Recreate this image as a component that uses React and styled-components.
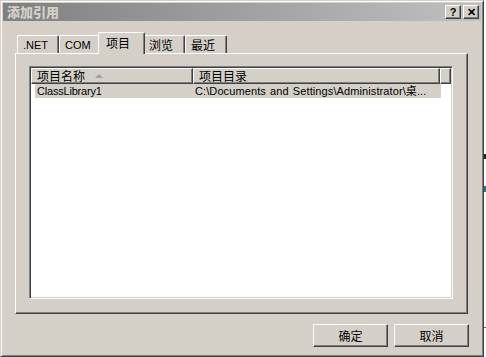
import React from 'react';
import styled, { createGlobalStyle } from 'styled-components';

const GlobalStyle = createGlobalStyle`
  html, body {
    margin: 0;
    padding: 0;
    background: #ffffff;
  }
  body {
    font-family: "Liberation Sans", "Noto Sans CJK SC", sans-serif;
    font-size: 11px;
    color: #000000;
  }
`;

const cjk = `"Noto Sans CJK SC", "Liberation Sans", sans-serif`;

// Whole page: dialog plus a thin strip of what lies behind it
const Page = styled.div`
  display: flex;
  width: 486px;
  height: 357px;
  overflow: hidden;
`;

// Classic raised dialog frame
const Window = styled.div`
  box-sizing: border-box;
  width: 484px;
  height: 357px;
  flex: none;
  background: #d4d0c8;
  border-top: 1px solid #d4d0c8;
  border-left: 1px solid #d4d0c8;
  border-right: 1px solid #404040;
  border-bottom: 1px solid #404040;
  box-shadow: inset 1px 1px 0 #ffffff, inset -1px -1px 0 #808080;
  padding: 2px;
  display: flex;
  flex-direction: column;
`;

const TitleBar = styled.div`
  height: 18px;
  flex: none;
  display: flex;
  align-items: center;
  justify-content: space-between;
  padding: 0 2px 0 4px;
  background: linear-gradient(to right, #808080, #c0c0c0);
`;

const Title = styled.span`
  font-family: ${cjk};
  font-size: 13px;
  font-weight: 900;
  color: #d4d0c8;
  line-height: 18px;
`;

const Caption = styled.div`
  display: flex;
  gap: 2px;
`;

const CaptionButton = styled.div`
  box-sizing: border-box;
  width: 16px;
  height: 14px;
  background: #d4d0c8;
  border-top: 1px solid #ffffff;
  border-left: 1px solid #ffffff;
  border-right: 1px solid #404040;
  border-bottom: 1px solid #404040;
  box-shadow: inset -1px -1px 0 #808080;
  display: flex;
  align-items: center;
  justify-content: center;
  font-family: "Liberation Sans", sans-serif;
  font-weight: bold;
  font-size: 11px;
  line-height: 1;
`;

const Body = styled.div`
  flex: 1;
  display: flex;
  flex-direction: column;
  padding: 11px 0 0 12px;
`;

const Tabs = styled.div`
  display: flex;
  align-items: flex-end;
  height: 21px;
  padding-left: 2px;
  position: relative;
  z-index: 1;
`;

const Tab = styled.div`
  box-sizing: border-box;
  width: ${p => (p.$active ? 47 : 42)}px;
  height: ${p => (p.$active ? 22 : 18)}px;
  margin: ${p => (p.$active ? '0 -2px -1px -3px' : '0')};
  background: #d4d0c8;
  border-top: 1px solid #ffffff;
  border-left: 1px solid #ffffff;
  border-right: 1px solid #404040;
  border-radius: 2px 2px 0 0;
  box-shadow: inset -1px 0 0 #808080;
  display: flex;
  align-items: ${p => (p.$active ? 'flex-start' : 'center')};
  padding: ${p => (p.$active ? '1px 0 0 7px' : '0 0 0 5px')};
  font-family: ${p => (p.$cjk ? cjk : '"Liberation Sans", sans-serif')};
  font-size: ${p => (p.$cjk ? '12px' : '11px')};
  position: relative;
  z-index: ${p => (p.$active ? 2 : 0)};
`;

const Panel = styled.div`
  box-sizing: border-box;
  width: 453px;
  height: 261px;
  border-top: 1px solid #ffffff;
  border-left: 1px solid #ffffff;
  border-right: 1px solid #404040;
  border-bottom: 1px solid #404040;
  box-shadow: inset -1px -1px 0 #808080;
  padding: 12px 0 0 13px;
`;

const ListView = styled.div`
  box-sizing: border-box;
  width: 424px;
  height: 233px;
  background: #ffffff;
  border-top: 1px solid #808080;
  border-left: 1px solid #808080;
  border-right: 1px solid #ffffff;
  border-bottom: 1px solid #ffffff;
  box-shadow: inset 1px 1px 0 #404040, inset -1px -1px 0 #d4d0c8;
  padding: 1px;
`;

const Header = styled.div`
  display: flex;
  height: 16px;
`;

const HeaderCell = styled.div`
  box-sizing: border-box;
  width: ${p => p.$w}px;
  flex: ${p => (p.$w ? 'none' : '1')};
  height: 16px;
  background: #d4d0c8;
  border-top: 1px solid #ffffff;
  border-left: 1px solid #ffffff;
  border-right: 1px solid #404040;
  border-bottom: 1px solid #404040;
  box-shadow: inset -1px -1px 0 #808080;
  display: flex;
  align-items: center;
  gap: 10px;
  padding-left: 5px;
  font-family: ${cjk};
  font-size: 12px;
  line-height: 14px;
`;

const SortArrow = styled.span`
  width: 0;
  height: 0;
  border-left: 4px solid transparent;
  border-right: 4px solid transparent;
  border-bottom: 4px solid #a0a0a0;
`;

const Row = styled.div`
  display: flex;
  height: 14px;
  margin: 0 10px 0 4px;
  background: #d4d0c8;
  align-items: center;
  white-space: nowrap;
`;

const Cell = styled.span`
  box-sizing: border-box;
  width: ${p => p.$w}px;
  flex: ${p => (p.$w ? 'none' : '1')};
  padding-left: 2px;
  overflow: hidden;
  font-family: "Liberation Sans", "Noto Sans CJK SC", sans-serif;
  font-size: 11px;
  letter-spacing: ${p => (p.$wide ? '0.1px' : '-0.2px')};
  word-spacing: ${p => (p.$wide ? '1px' : '0')};
  line-height: 14px;
`;

const Footer = styled.div`
  display: flex;
  justify-content: flex-end;
  gap: 6px;
  padding: 10px 12px 0 0;
`;

const Button = styled.button`
  box-sizing: border-box;
  width: 75px;
  height: 23px;
  background: #d4d0c8;
  border: none;
  border-top: 1px solid #ffffff;
  border-left: 1px solid #ffffff;
  border-right: 1px solid #404040;
  border-bottom: 1px solid #404040;
  box-shadow: inset -1px -1px 0 #808080;
  font-family: ${cjk};
  font-size: 12px;
  color: #000000;
  padding: 0;
`;

// Bit of desktop content peeking out beyond the dialog edge
const Behind = styled.div`
  width: 2px;
  flex: none;
  display: flex;
  flex-direction: column;
  align-items: flex-end;
`;

const Speck = styled.span`
  display: block;
  width: 2px;
  height: ${p => p.$h}px;
  margin-top: ${p => p.$top}px;
  background: ${p => p.$color};
`;

const tabs = [
  { label: '.NET' },
  { label: 'COM' },
  { label: '项目', cjk: true, active: true },
  { label: '浏览', cjk: true },
  { label: '最近', cjk: true },
];

export default function App() {
  return (
    <>
      <GlobalStyle />
      <Page>
        <Window>
          <TitleBar>
            <Title>添加引用</Title>
            <Caption>
              <CaptionButton>?</CaptionButton>
              <CaptionButton>✕</CaptionButton>
            </Caption>
          </TitleBar>
          <Body>
            <Tabs>
              {tabs.map(t => (
                <Tab key={t.label} $active={t.active} $cjk={t.cjk}>
                  {t.label}
                </Tab>
              ))}
            </Tabs>
            <Panel>
              <ListView>
                <Header>
                  <HeaderCell $w={162}>
                    项目名称
                    <SortArrow />
                  </HeaderCell>
                  <HeaderCell $w={247}>项目目录</HeaderCell>
                  <HeaderCell />
                </Header>
                <Row>
                  <Cell $w={158}>ClassLibrary1</Cell>
                  <Cell $wide>C:\Documents and Settings\Administrator\桌...</Cell>
                </Row>
              </ListView>
            </Panel>
            <Footer>
              <Button>确定</Button>
              <Button>取消</Button>
            </Footer>
          </Body>
        </Window>
        <Behind>
          <Speck $top={154} $h={5} $color="#202020" />
          <Speck $top={27} $h={6} $color="#1a7a9a" />
          <Speck $top={135} $h={1} $color="#2a8a2a" />
        </Behind>
      </Page>
    </>
  );
}
